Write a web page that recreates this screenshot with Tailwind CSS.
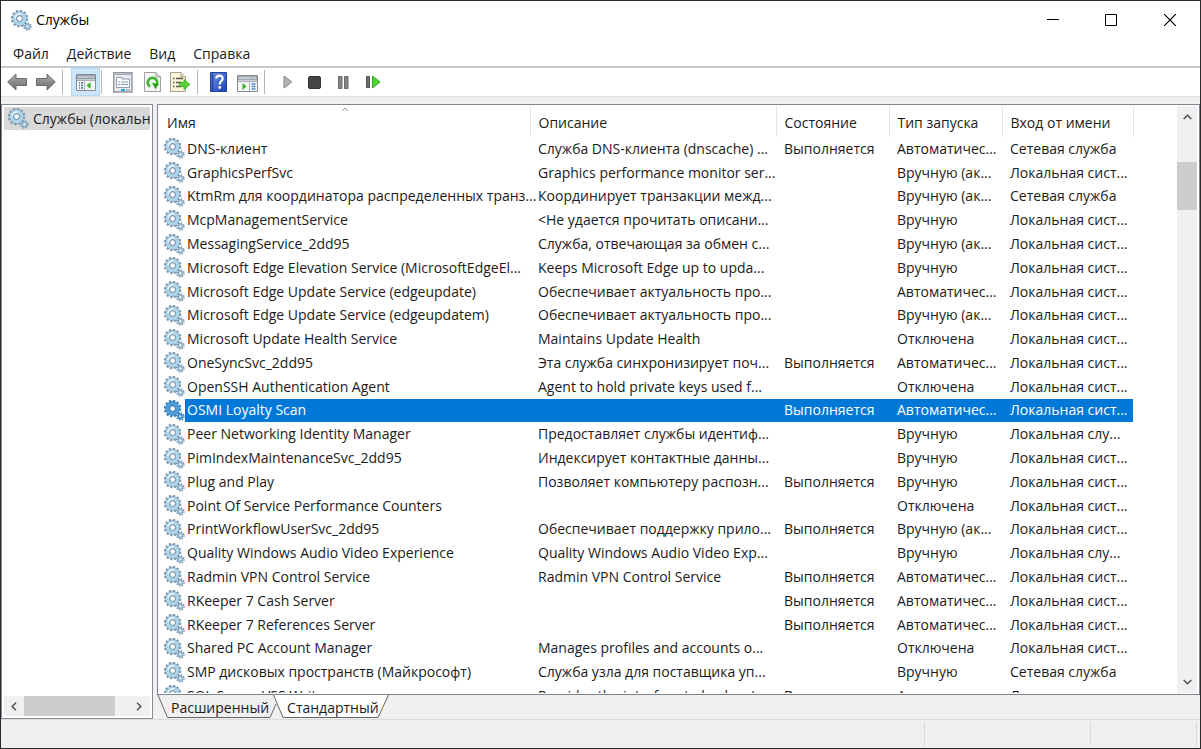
<!DOCTYPE html>
<html lang="ru">
<head>
<meta charset="utf-8">
<title>Службы</title>
<script src="https://cdn.jsdelivr.net/npm/@tailwindcss/browser@4"></script>
</head>
<body class="flex h-screen flex-col overflow-hidden border border-[#2a2a2c] bg-[#f0f0f0] font-['Open_Sans','Noto_Sans',sans-serif] text-sm text-[#1b1b1b]">

<svg class="absolute size-0" aria-hidden="true">
  <symbol id="gear" viewBox="0 0 22 22">
    <circle cx="9" cy="9" r="7.9" fill="none" stroke="#7d9ab0" stroke-width="2.6" stroke-dasharray="2.4 1.74"/>
    <circle cx="9" cy="9" r="5.2" fill="none" stroke="#7597b0" stroke-width="4.8"/>
    <circle cx="9" cy="9" r="5.2" fill="none" stroke="#aed4ea" stroke-width="3.8"/>
    <path d="M4.2 8.500A4.900 4.900 0 0 1 10.500 4.300" fill="none" stroke="#e2f2fb" stroke-width="1.800"/>
    <circle cx="9" cy="9" r="3" fill="#fff" stroke="#6787a2" stroke-width="1"/>
    <circle cx="17.2" cy="17.2" r="3.500" fill="none" stroke="#7090a8" stroke-width="2" stroke-dasharray="1.4 1.35"/>
    <circle cx="17.2" cy="17.2" r="2.1" fill="#fff" stroke="#8db4cf" stroke-width="1.8"/>
  </symbol>
  <symbol id="gear-selected" viewBox="0 0 22 22">
    <circle cx="9" cy="9" r="7.9" fill="none" stroke="#3a80b9" stroke-width="2.6" stroke-dasharray="2.4 1.74"/>
    <circle cx="9" cy="9" r="5.2" fill="none" stroke="#2f7cbc" stroke-width="4.8"/>
    <circle cx="9" cy="9" r="5.2" fill="none" stroke="#4f9fdb" stroke-width="3.6"/>
    <circle cx="9" cy="9" r="3" fill="#fff" stroke="#2a6ea8" stroke-width="1"/>
    <circle cx="17.2" cy="17.2" r="3.500" fill="none" stroke="#2f79b8" stroke-width="2" stroke-dasharray="1.4 1.35"/>
    <circle cx="17.2" cy="17.2" r="2.1" fill="#cfe6f7" stroke="#3f8fce" stroke-width="1.8"/>
  </symbol>
  <linearGradient id="steel" x1="0" y1="0" x2="0" y2="1"><stop offset="0" stop-color="#b5b5b5"/><stop offset=".5" stop-color="#8a8a8a"/><stop offset="1" stop-color="#707070"/></linearGradient>
  <linearGradient id="book" x1="0" y1="0" x2="1" y2="1"><stop offset="0" stop-color="#6f95e8"/><stop offset="1" stop-color="#1c3fb4"/></linearGradient>
</svg>

<header class="flex h-[38px] shrink-0 items-center bg-white pl-[10px]">
  <svg class="size-[21px]"><use href="#gear"/></svg>
  <h1 class="ml-1 flex-1 text-black">Службы</h1>
  <button aria-label="Свернуть" class="flex h-full w-[58px] items-center justify-center"><svg width="12" height="12"><path d="M0 5.5H12" stroke="#000"/></svg></button>
  <button aria-label="Развернуть" class="flex h-full w-[58px] items-center justify-center"><svg width="12" height="12"><path d="M.5 .5H11.5V11.5H.5Z" fill="none" stroke="#000"/></svg></button>
  <button aria-label="Закрыть" class="flex h-full w-[60px] items-center justify-center"><svg width="12" height="12"><path d="M0 0L12 12M12 0L0 12" stroke="#000" stroke-width="1.2"/></svg></button>
</header>

<nav class="flex h-[29px] shrink-0 items-center gap-[18px] border-b-2 border-[#c3cbd0] bg-white pt-[2px] pl-3">
  <button>Файл</button><button>Действие</button><button>Вид</button><button>Справка</button>
</nav>

<div role="toolbar" class="flex h-[29px] shrink-0 items-center border-b border-[#dedede] bg-white">
  <button aria-label="Назад" class="ml-[6px]"><svg width="21" height="20" viewBox="0 0 21 20"><path d="M.7 10L9 2V6.5H19.5V13.5H9V18Z" fill="url(#steel)" stroke="#6b6b6b"/></svg></button>
  <button aria-label="Вперёд" class="ml-[7px]"><svg width="21" height="20" viewBox="0 0 21 20"><path d="M20.3 10L12 2V6.5H1.5V13.5H12V18Z" fill="url(#steel)" stroke="#6b6b6b"/></svg></button>
  <span class="ml-[6px] h-6 w-px bg-[#b4b4b4]"></span>
  <button aria-label="Дерево консоли" class="ml-2 flex h-7 w-[29px] items-center justify-center border border-[#b3d9f7] bg-[#cde6fb] pt-px">
    <svg width="20" height="17" viewBox="0 0 20 17"><path d="M.5 .5H19.5V16.5H.5Z" fill="#f6f7f8" stroke="#838b94"/><path d="M1 1H19V5.5H1Z" fill="#98a1ab"/><path d="M2 3H13" stroke="#e9edf0"/><path d="M14 3H15.5M16.5 3H18" stroke="#fff"/><path d="M1 6.5H19M8.5 7V16" stroke="#a9b0b8"/><path d="M3 9H4M5 9H7M3 11.5H4M5 11.5H7M3 14H4M5 14H7" stroke="#4f6f93" stroke-width="1.3"/><path d="M14.5 8V15L10.5 11.5Z" fill="#3fae2a"/></svg>
  </button>
  <span class="ml-px h-6 w-px bg-[#b4b4b4]"></span>
  <button aria-label="Свойства" class="ml-[11px]"><svg width="20" height="21" viewBox="0 0 20 21"><path d="M.7 .7H19V20H.7Z" fill="#e9ebed" stroke="#8f959c" stroke-width="1.400"/><path d="M2 2.500H18" stroke="#a6acb4"/><path d="M3.500 5.500H9V7H16.500V15.500H3.500Z" fill="#fff" stroke="#8ba0b8"/><path d="M5 10H7M8 10H15M5 12.500H7M8 12.500H15" stroke="#8094ad"/><path d="M8 18H12" stroke="#21a6e0" stroke-width="2"/><path d="M13 18H17" stroke="#b4bbc3" stroke-width="2"/></svg></button>
  <button aria-label="Обновить" class="ml-[11px]"><svg width="17" height="20" viewBox="0 0 17 20"><path d="M.5 .5H12L16.500 5V19.500H.5Z" fill="#f6f6f4" stroke="#a0a0a0"/><path d="M12 .5V5H16.500" fill="#ddd" stroke="#a0a0a0"/><path d="M6 14.600A4.700 4.700 0 1 1 12.500 13" fill="none" stroke="#38b52d" stroke-width="2.600"/><path d="M8 10.800L14.800 12L11.500 17.300Z" fill="#2aa51f"/></svg></button>
  <button aria-label="Экспортировать список" class="ml-[9px]"><svg width="21" height="20" viewBox="0 0 21 20"><path d="M.5 .5H11L15.500 5V19.500H.5Z" fill="#fbf5d9" stroke="#a8a38e"/><path d="M11 .5V5H15.500" fill="#e9e1bb" stroke="#a8a38e"/><path d="M3 6.500H4.500M3 10.500H4.500M3 14.500H4.500M6 6.500H13M6 10.500H12M6 14.500H12" stroke="#5c5a50" stroke-width="1.300"/><path d="M9.500 10.500H14V7.500L20 12.500L14 17.500V14.500H9.500Z" fill="#5bd13b" stroke="#3aa824" stroke-width=".8"/></svg></button>
  <span class="ml-[6px] h-6 w-px bg-[#b4b4b4]"></span>
  <button aria-label="Справка" class="ml-3"><svg width="17" height="20" viewBox="0 0 17 20"><path d="M.5 .5H16.500V19.500H.5Z" fill="url(#book)" stroke="#23429c"/><path d="M2.500 1V19" stroke="#203f9e" stroke-width="1.500"/><path d="M6.300 6.500C6.500 2.700 12.700 2.700 12.700 6.400C12.700 9 9.700 9.200 9.700 12.400" fill="none" stroke="#fff" stroke-width="2.200"/><circle cx="9.700" cy="15.500" r="1.400" fill="#fff"/></svg></button>
  <button aria-label="Область действий" class="ml-[10px] pt-[2px]"><svg width="21" height="17" viewBox="0 0 21 17"><path d="M.5 .5H20.500V16.500H.5Z" fill="#f6f7f8" stroke="#838b94"/><path d="M1 1H20V5.500H1Z" fill="#a1a9b2"/><path d="M2 3H14" stroke="#e9edf0"/><path d="M15 3H16.500M17.500 3H19" stroke="#fff"/><path d="M1 6.500H20M12.500 7V16" stroke="#a9b0b8"/><path d="M14.500 9H18.500M14.500 11.500H18.500M14.500 14H18.500" stroke="#4b86c0" stroke-width="1.300"/><path d="M5.500 8V15L9.500 11.500Z" fill="#3fae2a"/></svg></button>
  <span class="ml-[6px] h-6 w-px bg-[#b4b4b4]"></span>
  <button aria-label="Запустить" class="ml-[18px]"><svg width="10" height="14" viewBox="0 0 10 14"><path d="M1 1L8.800 7L1 13Z" fill="#b5b5b5" stroke="#858585"/></svg></button>
  <button aria-label="Остановить" class="ml-[15px]"><svg width="13" height="13"><rect x=".5" y=".5" width="12" height="12" rx="1.500" fill="#454545" stroke="#333"/></svg></button>
  <button aria-label="Приостановить" class="ml-[17px]"><svg width="11" height="13"><path d="M.5 .5H4V12.500H.5ZM6.500 .5H10V12.500H6.500Z" fill="#858585" stroke="#696969"/></svg></button>
  <button aria-label="Перезапустить" class="ml-[17px]"><svg width="15" height="14" viewBox="0 0 15 14"><path d="M.5 1.500H3.500V12.500H.5Z" fill="#6e6e6e" stroke="#555"/><path d="M6.500 1L14 7L6.500 13Z" fill="#4fd52f" stroke="#31a51a"/></svg></button>
</div>

<main class="flex min-h-0 flex-1 gap-1 pt-[7px]">
  <aside class="flex w-[152px] shrink-0 flex-col border border-[#868c95] bg-white p-[2px]">
    <a href="#services" class="flex h-[23px] items-center gap-1 overflow-hidden bg-[#d9d9d9] pl-1 whitespace-nowrap"><svg class="size-[21px] shrink-0"><use href="#gear"/></svg>Службы (локальные)</a>
    <div class="mt-auto flex h-5 items-center bg-[#f0f0f0]" role="scrollbar" aria-label="Прокрутка дерева" aria-orientation="horizontal" aria-controls="services" aria-valuenow="0">
      <button aria-label="Влево" class="flex w-5 justify-center"><svg width="6" height="9"><path d="M5 .7L1.200 4.500L5 8.300" fill="none" stroke="#505050" stroke-width="1.500"/></svg></button>
      <span class="h-full w-[91px] bg-[#cdcdcd]"></span>
      <button aria-label="Вправо" class="ml-auto flex w-[22px] justify-center"><svg width="6" height="9"><path d="M1 .7L4.800 4.500L1 8.300" fill="none" stroke="#505050" stroke-width="1.500"/></svg></button>
    </div>
  </aside>

  <section class="flex min-w-0 flex-1 flex-col">
    <div class="flex min-h-0 flex-1 border border-[#7f858e] bg-white p-px pr-[2px]">
      <div class="relative min-w-0 flex-1 overflow-hidden">
        <svg class="absolute top-px left-[182px]" width="8" height="5"><path d="M1 4L4 1L7 4" fill="none" stroke="#999"/></svg>
        <table id="services" class="h-[602px] w-[974px] table-fixed border-collapse text-left whitespace-nowrap">
          <colgroup><col class="w-[26px]"><col class="w-[345px]"><col class="w-[246px]"><col class="w-[113px]"><col class="w-[113px]"><col class="w-[131px]"></colgroup>
          <thead>
            <tr class="h-[31px]">
              <th colspan="2" class="border-r border-[#e5e5e5] pt-[2px] pl-2 font-normal">Имя</th>
              <th class="border-r border-[#e5e5e5] pt-[2px] pl-2 font-normal">Описание</th>
              <th class="border-r border-[#e5e5e5] pt-[2px] pl-2 font-normal">Состояние</th>
              <th class="border-r border-[#e5e5e5] pt-[2px] pl-2 font-normal">Тип запуска</th>
              <th class="border-r border-[#e5e5e5] pt-[2px] pl-2 font-normal">Вход от имени</th>
            </tr>
          </thead>
          <tbody id="rows"></tbody>
        </table>
      </div>
      <div class="flex w-5 flex-col items-center bg-[#f0f0f0]" role="scrollbar" aria-label="Прокрутка списка" aria-controls="services" aria-valuenow="10">
        <button aria-label="Вверх" class="flex h-14 w-full justify-center pt-2"><svg width="9" height="6"><path d="M.7 5L4.500 1.200L8.300 5" fill="none" stroke="#505050" stroke-width="1.500"/></svg></button>
        <span class="h-12 w-full bg-[#cdcdcd]"></span>
        <button aria-label="Вниз" class="mt-auto flex w-full justify-center pb-2"><svg width="9" height="6"><path d="M.7 1L4.500 4.800L8.300 1" fill="none" stroke="#505050" stroke-width="1.500"/></svg></button>
      </div>
    </div>
    <div role="tablist" class="relative flex h-6 shrink-0 gap-[18px] pt-px pl-[14px]">
      <svg class="absolute top-0 left-0" width="235" height="24"><path d="M1 0L10.500 22.500H113L119 9" fill="none" stroke="#666"/><path d="M116.500 0L126 22.500H221L231.500 0" fill="#fff" stroke="#666"/></svg>
      <button role="tab" aria-selected="false" class="relative">Расширенный</button>
      <button role="tab" aria-selected="true" class="relative">Стандартный</button>
    </div>
  </section>
</main>

<footer class="flex h-[29px] shrink-0 border-t border-[#dcdcdc] py-[2px]">
  <span class="flex-1"></span>
  <span class="w-[166px] border-l border-[#dadada]"></span>
  <span class="w-[107px] border-x border-[#dadada]"></span>
  <span class="w-[3px]"></span>
</footer>

<script>
const L = 'Локальная сист...', N = 'Сетевая служба', U = 'Локальная слу...';
const A = 'Автоматичес...', M = 'Вручную', T = 'Вручную (ак...', O = 'Отключена', R = 'Выполняется';
const services = [
  ['DNS-клиент', 'Служба DNS-клиента (dnscache) ...', R, A, N],
  ['GraphicsPerfSvc', 'Graphics performance monitor ser...', '', T, L],
  ['KtmRm для координатора распределенных транз...', 'Координирует транзакции межд...', '', T, N],
  ['McpManagementService', '<Не удается прочитать описани...', '', M, L],
  ['MessagingService_2dd95', 'Служба, отвечающая за обмен с...', '', T, L],
  ['Microsoft Edge Elevation Service (MicrosoftEdgeEl...', 'Keeps Microsoft Edge up to upda...', '', M, L],
  ['Microsoft Edge Update Service (edgeupdate)', 'Обеспечивает актуальность про...', '', A, L],
  ['Microsoft Edge Update Service (edgeupdatem)', 'Обеспечивает актуальность про...', '', T, L],
  ['Microsoft Update Health Service', 'Maintains Update Health', '', O, L],
  ['OneSyncSvc_2dd95', 'Эта служба синхронизирует поч...', R, A, L],
  ['OpenSSH Authentication Agent', 'Agent to hold private keys used f...', '', O, L],
  ['OSMI Loyalty Scan', '', R, A, L],
  ['Peer Networking Identity Manager', 'Предоставляет службы идентиф...', '', M, U],
  ['PimIndexMaintenanceSvc_2dd95', 'Индексирует контактные данны...', '', M, L],
  ['Plug and Play', 'Позволяет компьютеру распозн...', R, M, L],
  ['Point Of Service Performance Counters', '', '', O, L],
  ['PrintWorkflowUserSvc_2dd95', 'Обеспечивает поддержку прило...', R, T, L],
  ['Quality Windows Audio Video Experience', 'Quality Windows Audio Video Exp...', '', M, U],
  ['Radmin VPN Control Service', 'Radmin VPN Control Service', R, A, L],
  ['RKeeper 7 Cash Server', '', R, A, L],
  ['RKeeper 7 References Server', '', R, A, L],
  ['Shared PC Account Manager', 'Manages profiles and accounts o...', '', O, L],
  ['SMP дисковых пространств (Майкрософт)', 'Служба узла для поставщика уп...', '', M, N],
  ['SQL Server VSS Writer', 'Provides the interface to backup/...', R, A, L],
];
const body = document.getElementById('rows');
services.forEach((s, i) => {
  const on = i === 11;
  const tr = document.createElement('tr');
  const icon = document.createElement('td');
  icon.className = 'p-0 pl-[5px]';
  icon.innerHTML = '<svg class="size-[21px]"><use href="' + (on ? '#gear-selected' : '#gear') + '"/></svg>';
  tr.append(icon);
  s.forEach((text, c) => {
    const td = document.createElement('td');
    td.className = (c ? 'p-0 pl-2' : 'p-0 pl-[2px]') + (on ? ' bg-[#0078d7] text-white' : '');
    td.textContent = text;
    tr.append(td);
  });
  body.append(tr);
});
</script>
</body>
</html>
